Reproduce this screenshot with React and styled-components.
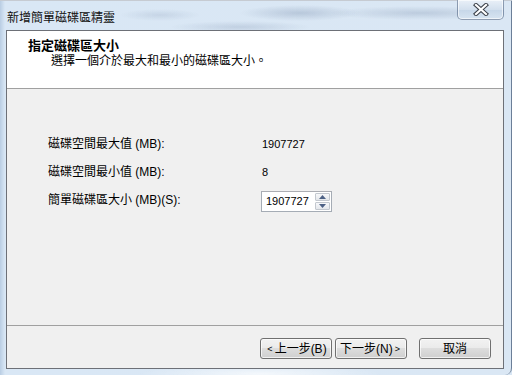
import React from 'react';
import styled, { createGlobalStyle } from 'styled-components';

const GlobalStyle = createGlobalStyle`
  html, body {
    margin: 0;
    padding: 0;
    background: #d8e6f4;
  }
  body {
    font-family: "Liberation Sans", "Noto Sans CJK TC", sans-serif;
    font-size: 12px;
    color: #000;
  }
`;

const Window = styled.div`
  box-sizing: border-box;
  width: 512px;
  height: 375px;
  display: flex;
  flex-direction: column;
  padding: 0 7px 6px 6px;
  border-right: 1px solid rgba(40, 60, 90, 0.55);
  border-bottom-right-radius: 7px;
  background:
    radial-gradient(ellipse 60px 8px at 300px 12px, rgba(120, 140, 170, 0.35), transparent),
    radial-gradient(ellipse 90px 7px at 420px 12px, rgba(120, 140, 170, 0.3), transparent),
    radial-gradient(ellipse 70px 6px at 240px 26px, rgba(120, 140, 170, 0.25), transparent),
    radial-gradient(ellipse 40px 6px at 160px 14px, rgba(120, 140, 170, 0.2), transparent),
    radial-gradient(ellipse 120px 10px at 260px 373px, rgba(255, 255, 255, 0.7), transparent),
    linear-gradient(90deg, #b9cde3 0px, #d9e7f5 5px, #dae7f4 100%);
  border-top: 1px solid #c6cbd2;
`;

const TitleBar = styled.div`
  height: 29px;
  display: flex;
  align-items: flex-start;
  justify-content: space-between;
`;

const Title = styled.div`
  padding: 10px 0 0 1px;
  line-height: 14px;
  font-size: 12px;
  color: #111;
`;

const CloseButton = styled.div`
  box-sizing: border-box;
  width: 47px;
  height: 20px;
  margin-top: -1px;
  display: flex;
  align-items: center;
  justify-content: center;
  border: 1px solid rgba(70, 90, 120, 0.55);
  border-top: none;
  border-radius: 0 0 5px 5px;
  background: linear-gradient(#e9f0f8, #d3e0ee 50%, #c6d6e8 51%, #d7e4f1);
  box-shadow: inset 0 0 0 1px rgba(255, 255, 255, 0.6);
`;

const Client = styled.div`
  flex: 1;
  display: flex;
  flex-direction: column;
  border: 1px solid #6d7077;
  background: #f0f0f0;
`;

const Header = styled.div`
  height: 58px;
  box-sizing: border-box;
  padding: 7px 0 0 21px;
  background: #fff;
  border-bottom: 1px solid #a0a0a0;
`;

const HeaderTitle = styled.div`
  font-weight: bold;
  font-size: 13px;
  line-height: 15px;
`;

const HeaderSub = styled.div`
  padding-left: 23px;
  line-height: 16px;
`;

const Body = styled.div`
  flex: 1;
  box-sizing: border-box;
  padding: 41px 0 0 41px;
  border-bottom: 1px solid #a0a0a0;
`;

const Fields = styled.div`
  display: grid;
  grid-template-columns: 213px auto;
  grid-template-rows: 28px 27px 29px;
  align-items: center;
  justify-content: start;
`;

const Label = styled.div`
  line-height: 14px;
`;

const Value = styled.div`
  padding-left: 1px;
  font-size: 11px;
  line-height: 14px;
`;

const SpinBox = styled.div`
  box-sizing: border-box;
  width: 71px;
  height: 21px;
  margin-top: 3px;
  display: flex;
  align-items: stretch;
  padding: 1px;
  background: #fff;
  border: 1px solid #a5acb5;
  border-top-color: #abadb3;
`;

const SpinText = styled.div`
  flex: 1;
  padding-left: 3px;
  font-size: 11px;
  line-height: 17px;
`;

const SpinButtons = styled.div`
  width: 15px;
  display: flex;
  flex-direction: column;
  gap: 1px;
`;

const SpinButton = styled.div`
  flex: 1;
  display: flex;
  align-items: center;
  justify-content: center;
  border: 1px solid #c3c8cf;
  border-radius: 1px;
  background: linear-gradient(#f7f8fa, #e4e7eb);
`;

const Footer = styled.div`
  height: 42px;
  box-sizing: border-box;
  padding: 12px 12px 0 0;
  display: flex;
  justify-content: flex-end;
  align-items: flex-start;
`;

const Button = styled.div`
  box-sizing: border-box;
  width: 72px;
  height: 21px;
  margin-left: ${p => p.$gap}px;
  display: flex;
  align-items: center;
  justify-content: center;
  border: 1px solid #707070;
  border-radius: 3px;
  background: linear-gradient(#f2f2f2 0%, #ebebeb 45%, #dddddd 50%, #cfcfcf 100%);
  box-shadow: inset 0 0 0 1px rgba(255, 255, 255, 0.7);
  font-size: 12px;
  line-height: 14px;
  white-space: nowrap;
`;

const Small = styled.span`
  font-size: 9px;
  margin: 0 2px;
`;

function Arrow({ up }) {
  return (
    <svg width="7" height="4" viewBox="0 0 7 4">
      <path d={up ? 'M0 4 L3.5 0 L7 4 Z' : 'M0 0 L3.5 4 L7 0 Z'} fill="#4d6185" />
    </svg>
  );
}

function CloseIcon() {
  return (
    <svg width="16" height="13" viewBox="0 0 16 13">
      <path d="M3 2 L13 11 M13 2 L3 11" stroke="#3a3f48" strokeWidth="4.2" strokeLinecap="square" />
      <path d="M3 2 L13 11 M13 2 L3 11" stroke="#ffffff" strokeWidth="2.2" strokeLinecap="square" />
    </svg>
  );
}

export default function App() {
  return (
    <>
      <GlobalStyle />
      <Window>
        <TitleBar>
          <Title>新增簡單磁碟區精靈</Title>
          <CloseButton><CloseIcon /></CloseButton>
        </TitleBar>
        <Client>
          <Header>
            <HeaderTitle>指定磁碟區大小</HeaderTitle>
            <HeaderSub>選擇一個介於最大和最小的磁碟區大小。</HeaderSub>
          </Header>
          <Body>
            <Fields>
              <Label>磁碟空間最大值 (MB):</Label>
              <Value>1907727</Value>
              <Label>磁碟空間最小值 (MB):</Label>
              <Value>8</Value>
              <Label>簡單磁碟區大小 (MB)(S):</Label>
              <SpinBox>
                <SpinText>1907727</SpinText>
                <SpinButtons>
                  <SpinButton><Arrow up /></SpinButton>
                  <SpinButton><Arrow /></SpinButton>
                </SpinButtons>
              </SpinBox>
            </Fields>
          </Body>
          <Footer>
            <Button $gap={0}><Small>&lt;</Small>上一步(B)</Button>
            <Button $gap={3}>下一步(N)<Small>&gt;</Small></Button>
            <Button $gap={12}>取消</Button>
          </Footer>
        </Client>
      </Window>
    </>
  );
}
